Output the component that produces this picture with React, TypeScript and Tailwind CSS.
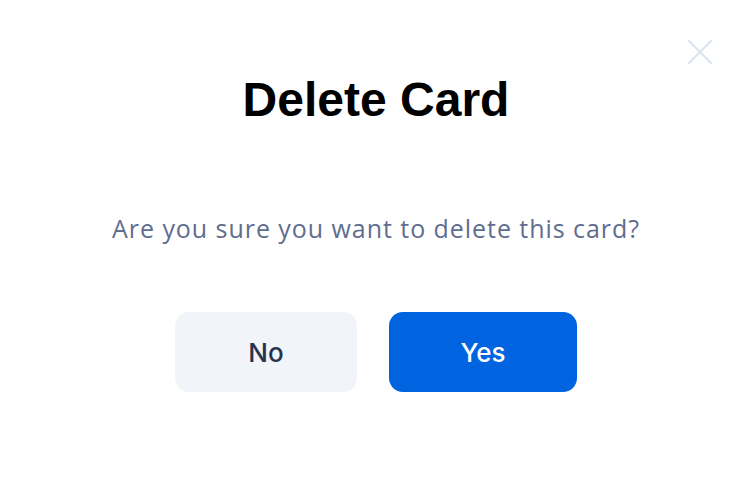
import React from "react";

export default function App() {
  return (
    <div className="relative w-[752px] h-[488px] bg-white" style={{ fontFamily: "'Liberation Sans', Arial, sans-serif" }}>
      <button className="absolute left-[686px] top-[38px] w-[28px] h-[28px] flex items-center justify-center">
        <svg width="28" height="28" viewBox="0 0 28 28" fill="none" stroke="#dbe3ef" strokeWidth="2.2" strokeLinecap="round">
          <path d="M3 3L25 25M25 3L3 25" />
        </svg>
      </button>
      <div className="flex flex-col items-center pt-[72px]">
        <h1 className="text-[48px] leading-[56px] font-bold text-black">Delete Card</h1>
        <p className="mt-[84px] text-[25px] leading-[32px] tracking-[0.95px] text-[#5f6d8f]" style={{ fontFamily: "'Open Sans', sans-serif" }}>Are you sure you want to delete this card?</p>
        <div className="mt-[68px] flex gap-[32px]" style={{ fontFamily: "Inter, sans-serif" }}>
          <button className="w-[182px] h-[80px] rounded-[14px] bg-[#f1f4f9] text-[26px] font-medium text-[#27324f]">No</button>
          <button className="w-[188px] h-[80px] rounded-[14px] bg-[#0064e1] text-[26px] font-medium text-white">Yes</button>
        </div>
      </div>
    </div>
  );
}
